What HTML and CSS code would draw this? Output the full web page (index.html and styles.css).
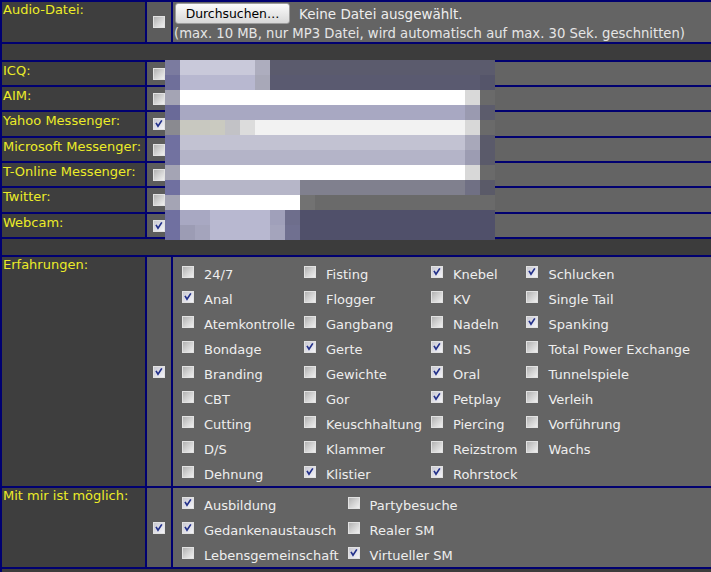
FILE: index.html
```html
<!DOCTYPE html>
<html lang="de">
<head>
<meta charset="utf-8">
<title>Profil</title>
<link rel="stylesheet" href="styles.css">
</head>
<body>
<div class="page">
  <div class="form">
    <div class="lbl">Audio-Datei:</div>
    <div class="chk"><span class="cb"></span></div>
    <div class="val audio">
      <div class="file"><span class="btn">Durchsuchen…</span><span class="nofile">Keine Datei ausgewählt.</span></div>
      <div class="hint">(max. 10 MB, nur MP3 Datei, wird automatisch auf max. 30 Sek. geschnitten)</div>
    </div>

    <div class="sep"></div>

    <div class="lbl im">ICQ:</div>
    <div class="chk"><span class="cb"></span></div>
    <div class="val"></div>

    <div class="lbl im">AIM:</div>
    <div class="chk"><span class="cb"></span></div>
    <div class="val"></div>

    <div class="lbl im">Yahoo Messenger:</div>
    <div class="chk"><span class="cb on"><svg viewBox="0 0 12 12"><polyline points="2.4,4.6 4.8,8.6 9.4,1.6"/></svg></span></div>
    <div class="val"></div>

    <div class="lbl im">Microsoft Messenger:</div>
    <div class="chk"><span class="cb"></span></div>
    <div class="val"></div>

    <div class="lbl im">T-Online Messenger:</div>
    <div class="chk"><span class="cb"></span></div>
    <div class="val"></div>

    <div class="lbl im">Twitter:</div>
    <div class="chk"><span class="cb"></span></div>
    <div class="val"></div>

    <div class="lbl im">Webcam:</div>
    <div class="chk"><span class="cb on"><svg viewBox="0 0 12 12"><polyline points="2.4,4.6 4.8,8.6 9.4,1.6"/></svg></span></div>
    <div class="val"></div>

    <div class="sep"></div>

    <div class="lbl">Erfahrungen:</div>
    <div class="chk"><span class="cb on"><svg viewBox="0 0 12 12"><polyline points="2.4,4.6 4.8,8.6 9.4,1.6"/></svg></span></div>
    <div class="val">
      <div class="opts nine">
        <div class="opt"><span class="cb"></span><span class="t">24/7</span></div>
        <div class="opt"><span class="cb on"><svg viewBox="0 0 12 12"><polyline points="2.4,4.6 4.8,8.6 9.4,1.6"/></svg></span><span class="t">Anal</span></div>
        <div class="opt"><span class="cb"></span><span class="t">Atemkontrolle</span></div>
        <div class="opt"><span class="cb"></span><span class="t">Bondage</span></div>
        <div class="opt"><span class="cb"></span><span class="t">Branding</span></div>
        <div class="opt"><span class="cb"></span><span class="t">CBT</span></div>
        <div class="opt"><span class="cb"></span><span class="t">Cutting</span></div>
        <div class="opt"><span class="cb"></span><span class="t">D/S</span></div>
        <div class="opt"><span class="cb"></span><span class="t">Dehnung</span></div>

        <div class="opt"><span class="cb"></span><span class="t">Fisting</span></div>
        <div class="opt"><span class="cb"></span><span class="t">Flogger</span></div>
        <div class="opt"><span class="cb"></span><span class="t">Gangbang</span></div>
        <div class="opt"><span class="cb on"><svg viewBox="0 0 12 12"><polyline points="2.4,4.6 4.8,8.6 9.4,1.6"/></svg></span><span class="t">Gerte</span></div>
        <div class="opt"><span class="cb"></span><span class="t">Gewichte</span></div>
        <div class="opt"><span class="cb"></span><span class="t">Gor</span></div>
        <div class="opt"><span class="cb"></span><span class="t">Keuschhaltung</span></div>
        <div class="opt"><span class="cb"></span><span class="t">Klammer</span></div>
        <div class="opt"><span class="cb on"><svg viewBox="0 0 12 12"><polyline points="2.4,4.6 4.8,8.6 9.4,1.6"/></svg></span><span class="t">Klistier</span></div>

        <div class="opt"><span class="cb on"><svg viewBox="0 0 12 12"><polyline points="2.4,4.6 4.8,8.6 9.4,1.6"/></svg></span><span class="t">Knebel</span></div>
        <div class="opt"><span class="cb"></span><span class="t">KV</span></div>
        <div class="opt"><span class="cb"></span><span class="t">Nadeln</span></div>
        <div class="opt"><span class="cb on"><svg viewBox="0 0 12 12"><polyline points="2.4,4.6 4.8,8.6 9.4,1.6"/></svg></span><span class="t">NS</span></div>
        <div class="opt"><span class="cb on"><svg viewBox="0 0 12 12"><polyline points="2.4,4.6 4.8,8.6 9.4,1.6"/></svg></span><span class="t">Oral</span></div>
        <div class="opt"><span class="cb on"><svg viewBox="0 0 12 12"><polyline points="2.4,4.6 4.8,8.6 9.4,1.6"/></svg></span><span class="t">Petplay</span></div>
        <div class="opt"><span class="cb"></span><span class="t">Piercing</span></div>
        <div class="opt"><span class="cb"></span><span class="t">Reizstrom</span></div>
        <div class="opt"><span class="cb on"><svg viewBox="0 0 12 12"><polyline points="2.4,4.6 4.8,8.6 9.4,1.6"/></svg></span><span class="t">Rohrstock</span></div>

        <div class="opt"><span class="cb on"><svg viewBox="0 0 12 12"><polyline points="2.4,4.6 4.8,8.6 9.4,1.6"/></svg></span><span class="t">Schlucken</span></div>
        <div class="opt"><span class="cb"></span><span class="t">Single Tail</span></div>
        <div class="opt"><span class="cb on"><svg viewBox="0 0 12 12"><polyline points="2.4,4.6 4.8,8.6 9.4,1.6"/></svg></span><span class="t">Spanking</span></div>
        <div class="opt"><span class="cb"></span><span class="t">Total Power Exchange</span></div>
        <div class="opt"><span class="cb"></span><span class="t">Tunnelspiele</span></div>
        <div class="opt"><span class="cb"></span><span class="t">Verleih</span></div>
        <div class="opt"><span class="cb"></span><span class="t">Vorführung</span></div>
        <div class="opt"><span class="cb"></span><span class="t">Wachs</span></div>
      </div>
    </div>

    <div class="lbl">Mit mir ist möglich:</div>
    <div class="chk"><span class="cb on"><svg viewBox="0 0 12 12"><polyline points="2.4,4.6 4.8,8.6 9.4,1.6"/></svg></span></div>
    <div class="val">
      <div class="opts three">
        <div class="opt"><span class="cb on"><svg viewBox="0 0 12 12"><polyline points="2.4,4.6 4.8,8.6 9.4,1.6"/></svg></span><span class="t">Ausbildung</span></div>
        <div class="opt"><span class="cb on"><svg viewBox="0 0 12 12"><polyline points="2.4,4.6 4.8,8.6 9.4,1.6"/></svg></span><span class="t">Gedankenaustausch</span></div>
        <div class="opt"><span class="cb"></span><span class="t">Lebensgemeinschaft</span></div>
        <div class="opt"><span class="cb"></span><span class="t">Partybesuche</span></div>
        <div class="opt"><span class="cb"></span><span class="t">Realer SM</span></div>
        <div class="opt"><span class="cb on"><svg viewBox="0 0 12 12"><polyline points="2.4,4.6 4.8,8.6 9.4,1.6"/></svg></span><span class="t">Virtueller SM</span></div>
      </div>
    </div>

    <div class="sep"></div>
  </div>

  <div class="pixelate" aria-hidden="true">
    <div class="px r0"></div>
    <div class="px r1"></div>
    <div class="px r2"></div>
    <div class="px r3"></div>
    <div class="px r4"></div>
    <div class="px r5"></div>
    <div class="px r6"></div>
    <div class="px r7"></div>
    <div class="px r8"></div>
    <div class="px r9"></div>
    <div class="px r10"></div>
    <div class="px r11"></div>
  </div>
</div>
</body>
</html>
```

FILE: styles.css
```css
html, body {
  margin: 0;
  padding: 0;
  background: #3c3c3c;
  overflow: hidden;
}

body {
  font-family: "DejaVu Sans", Verdana, sans-serif;
  font-size: 13px;
  line-height: 16px;
}

.page {
  position: relative;
  width: 711px;
  height: 572px;
  overflow: hidden;
}

.form {
  display: grid;
  grid-template-columns: 143px 24px 538px;
  grid-template-rows: 40px 16px 23px 23px 24px 23px 23px 24px 23px 16px auto auto 16px;
  gap: 2px;
  padding: 2px 0 2px 2px;
  background: #000070;
  width: 709px;
}

.lbl {
  background: #3e3e3e;
  color: #ecec28;
  padding-left: 1px;
  white-space: nowrap;
}

.lbl.im {
  padding-top: 1px;
}

.chk {
  background: #5c5c5c;
  display: flex;
  align-items: center;
  justify-content: center;
}

.val {
  background: #646464;
  color: #ececec;
}

.sep {
  grid-column: 1 / -1;
  background: #3c3c3c;
}

/* checkbox */
.cb {
  box-sizing: border-box;
  width: 12px;
  height: 12px;
  flex: none;
  border: 1px solid #e2e2e2;
  background: linear-gradient(135deg, #b2b2b2 0%, #d2d2d2 50%, #efefef 100%);
  display: block;
}

.cb.on {
  background: linear-gradient(135deg, #c8c8d0 0%, #dedee6 50%, #f4f4f8 100%);
}

.cb svg {
  display: block;
  width: 10px;
  height: 10px;
}

.cb polyline {
  fill: none;
  stroke: #22308a;
  stroke-width: 2;
  stroke-linejoin: miter;
}

/* audio row */
.val.audio {
  padding: 1px 0 0 1px;
}

.file {
  display: flex;
  align-items: center;
  height: 21px;
}

.btn {
  box-sizing: border-box;
  width: 115px;
  height: 21px;
  margin-left: 1px;
  border: 1px solid #9c9c9c;
  border-radius: 3px;
  background: linear-gradient(#fbfbfb, #e6e6e6 60%, #d8d8d8);
  color: #000;
  font-size: 12.4px;
  display: flex;
  align-items: center;
  justify-content: center;
}

.nofile {
  margin-left: 9px;
  color: #eeeeee;
  font-size: 13.5px;
}

.hint {
  margin-top: 2px;
  color: #e6e6e6;
  font-size: 13.2px;
  white-space: nowrap;
}

/* option grids */
.opts {
  display: grid;
  grid-auto-flow: column;
  grid-auto-columns: max-content;
  column-gap: 0;
  padding: 3px 0 1px 0;
}

.opts.nine {
  grid-template-rows: repeat(9, 25px);
}

.opts.three {
  grid-template-rows: repeat(3, 25px);
}

.opt {
  display: flex;
  align-items: flex-start;
  padding-left: 9px;
  white-space: nowrap;
}

.opt .cb {
  margin-top: 6px;
  margin-right: 10px;
}

.opt .t {
  margin-top: 7px;
  color: #eeeeee;
}

/* pixelated privacy overlay */
.pixelate {
  position: absolute;
  left: 165px;
  top: 60px;
  width: 330px;
  height: 180px;
}

.px {
  height: 15px;
}

.r0 { background: linear-gradient(to right, #7b7b9f 0 15px, #c9c9da 15px 90px, #adadbe 90px 105px, #5b5b6d 105px); }
.r1 { background: linear-gradient(to right, #6f6f9a 0 15px, #b8b8d0 15px 90px, #a8a8b8 90px 105px, #5a5a70 105px 315px, #55556a 315px); }
.r2 { background: linear-gradient(to right, #a4a4b4 0 15px, #ffffff 15px 300px, #d9d9d9 300px 315px, #6a6a6a 315px); }
.r3 { background: linear-gradient(to right, #6a6a98 0 15px, #a8a8c2 15px 300px, #9a9ab0 300px 315px, #5c5c6c 315px); }
.r4 { background: linear-gradient(to right, #8a8a90 0 15px, #c8c8c0 15px 45px, #cacac0 45px 60px, #c2c2c6 60px 75px, #dcdcdc 75px 90px, #f2f2f2 90px 300px, #d8d8d8 300px 315px, #6a6a6a 315px); }
.r5 { background: linear-gradient(to right, #7070a0 0 15px, #c2c2d2 15px 300px, #a8a8ba 300px 315px, #5a5a6a 315px); }
.r6 { background: linear-gradient(to right, #7272a0 0 15px, #b4b4c8 15px 300px, #9c9cb2 300px 315px, #5a5a6a 315px); }
.r7 { background: linear-gradient(to right, #a4a4b4 0 15px, #ffffff 15px 300px, #d8d8d8 300px 315px, #6a6a6a 315px); }
.r8 { background: linear-gradient(to right, #7070a0 0 15px, #b6b6c8 15px 135px, #80808e 135px 300px, #707084 300px 315px, #5a5a68 315px); }
.r9 { background: linear-gradient(to right, #a4a4b4 0 15px, #ffffff 15px 135px, #727272 135px 150px, #6a6a6a 150px); }
.r10 { background: linear-gradient(to right, #7070a0 0 15px, #a8a8c2 15px 45px, #b8b8d0 45px 105px, #a0a0ba 105px 120px, #6e6e8c 120px 135px, #50506a 135px); }
.r11 { background: linear-gradient(to right, #7070a0 0 15px, #9c9cb4 15px 30px, #a4a4bc 30px 45px, #b8b8d0 45px 105px, #a4a4bc 105px 120px, #707090 120px 135px, #50506a 135px); }
```
